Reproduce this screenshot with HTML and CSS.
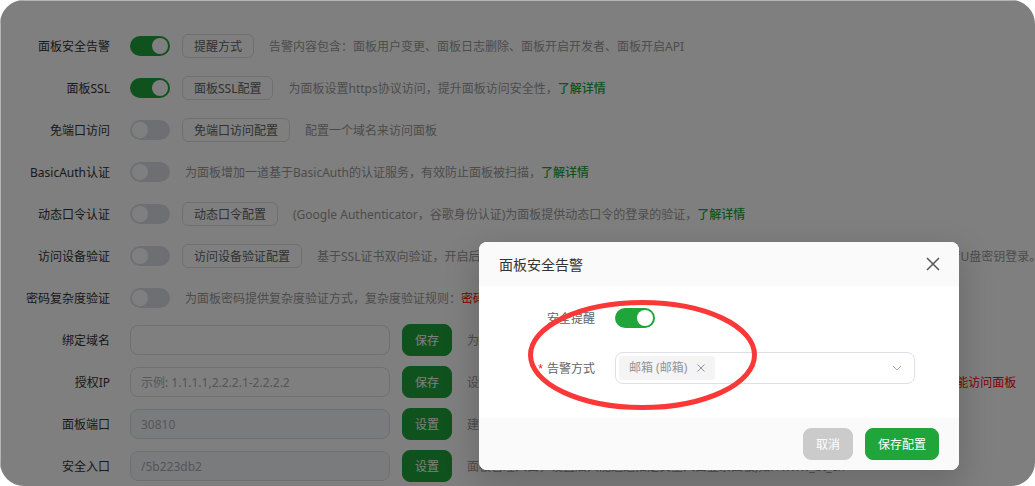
FILE: index.html
```html
<!DOCTYPE html>
<html lang="zh-CN">
<head>
  <meta charset="UTF-8">
  <meta name="viewport" content="width=device-width, initial-scale=1.0">
  <title>面板设置</title>
  <link rel="stylesheet" href="styles.css">
</head>
<body>
  <div class="panel">
    <form class="settings">
      <div class="row">
        <label class="label" for="alarm">面板安全告警</label>
        <input type="checkbox" class="switch" id="alarm" checked>
        <button type="button" class="btn">提醒方式</button>
        <p class="hint">告警内容包含：面板用户变更、面板日志删除、面板开启开发者、面板开启API</p>
      </div>
      <div class="row">
        <label class="label" for="ssl">面板SSL</label>
        <input type="checkbox" class="switch" id="ssl" checked>
        <button type="button" class="btn">面板SSL配置</button>
        <p class="hint">为面板设置https协议访问，提升面板访问安全性，<a href="#">了解详情</a></p>
      </div>
      <div class="row">
        <label class="label" for="no-port">免端口访问</label>
        <input type="checkbox" class="switch" id="no-port">
        <button type="button" class="btn">免端口访问配置</button>
        <p class="hint">配置一个域名来访问面板</p>
      </div>
      <div class="row">
        <label class="label" for="basic-auth">BasicAuth认证</label>
        <input type="checkbox" class="switch" id="basic-auth">
        <p class="hint">为面板增加一道基于BasicAuth的认证服务，有效防止面板被扫描，<a href="#">了解详情</a></p>
      </div>
      <div class="row">
        <label class="label" for="otp">动态口令认证</label>
        <input type="checkbox" class="switch" id="otp">
        <button type="button" class="btn">动态口令配置</button>
        <p class="hint">(Google Authenticator，谷歌身份认证)为面板提供动态口令的登录的验证，<a href="#">了解详情</a></p>
      </div>
      <div class="row">
        <label class="label" for="device">访问设备验证</label>
        <input type="checkbox" class="switch" id="device">
        <button type="button" class="btn">访问设备验证配置</button>
        <p class="hint">基于SSL证书双向验证，开启后，仅允许已安装授权证书的设备访问面板，未授权设备将无法打开面板登录页面，类似银行U盘密钥登录。</p>
      </div>
      <div class="row">
        <label class="label" for="complexity">密码复杂度验证</label>
        <input type="checkbox" class="switch" id="complexity">
        <p class="hint">为面板密码提供复杂度验证方式，复杂度验证规则：<span class="warn">密码长度大于8位且大写字母、小写字母、数字、特殊字符至少3项组合</span></p>
      </div>
      <div class="row">
        <label class="label" for="domain">绑定域名</label>
        <input type="text" class="text" id="domain">
        <button type="button" class="btn btn-primary">保存</button>
        <p class="hint">为面板绑定一个访问域名；<span class="warn">注意：一旦绑定域名，只能通过域名访问面板</span></p>
      </div>
      <div class="row">
        <label class="label" for="ip">授权IP</label>
        <input type="text" class="text" id="ip" placeholder="示例: 1.1.1.1,2.2.2.1-2.2.2.2">
        <button type="button" class="btn btn-primary">保存</button>
        <p class="hint">设置访问授权IP，可设置多个IP地址，逗号隔开，<span class="warn">注意：一旦设置授权IP，只有指定IP的电脑能访问面板</span></p>
      </div>
      <div class="row">
        <label class="label" for="port">面板端口</label>
        <input type="text" class="text" id="port" value="30810" disabled>
        <button type="button" class="btn btn-primary">设置</button>
        <p class="hint">建议端口范围8888 - 65535，<span class="warn">注意：请提前在安全组放行新端口</span></p>
      </div>
      <div class="row">
        <label class="label" for="entry">安全入口</label>
        <input type="text" class="text" id="entry" value="/5b223db2" disabled>
        <button type="button" class="btn btn-primary">设置</button>
        <p class="hint">面板管理入口，设置后只能通过指定安全入口登录面板,如: /www_bt_cn</p>
      </div>
    </form>

    <div class="overlay">
      <div class="dialog" role="dialog" aria-labelledby="dialog-title">
        <div class="dialog-header">
          <h2 id="dialog-title">面板安全告警</h2>
          <button type="button" class="close" aria-label="关闭">
            <svg width="14" height="14" viewBox="0 0 14 14"><path d="M1 1l12 12M13 1L1 13"/></svg>
          </button>
        </div>
        <div class="dialog-body">
          <div class="field">
            <label class="field-label" for="remind">安全提醒</label>
            <input type="checkbox" class="switch" id="remind" checked>
          </div>
          <div class="field">
            <label class="field-label required" for="way">告警方式</label>
            <div class="multi">
              <span class="tag">邮箱 (邮箱)
                <button type="button" class="tag-close" aria-label="移除">
                  <svg width="8" height="8" viewBox="0 0 8 8"><path d="M0.5 0.5l7 7M7.5 0.5l-7 7"/></svg>
                </button>
              </span>
              <select id="way"><option></option></select>
              <svg class="arrow" width="10" height="6" viewBox="0 0 10 6"><path d="M1 1l4 4 4-4"/></svg>
            </div>
          </div>
        </div>
        <div class="dialog-footer">
          <button type="button" class="btn btn-cancel">取消</button>
          <button type="button" class="btn btn-primary">保存配置</button>
        </div>
        <!-- 红圈标注 -->
        <svg class="mark" width="230" height="112" viewBox="0 0 230 112"><ellipse cx="115.5" cy="56" rx="112" ry="52.5"/></svg>
      </div>
    </div>
  </div>
</body>
</html>
```
FILE: styles.css
```css
* {
  box-sizing: border-box;
}
body {
  margin: 0;
  background-color: #fff;
}
body, button, input, select {
  font-family: "Noto Sans", "Noto Sans CJK SC", sans-serif;
  font-size: 12px;
  line-height: 18px;
}
.panel {
  position: relative;
  overflow: hidden;
  height: 100vh;
  border-radius: 24px;
}
/* 设置列表 */
.settings {
  display: flex;
  flex-direction: column;
  gap: 10px;
  padding-top: 30px;
}
.row {
  display: flex;
  align-items: center;
  gap: 12px;
  height: 32px;
  white-space: nowrap;
}
.label {
  flex: none;
  width: 110px;
  margin-right: 8px;
  padding-top: 2px;
  text-align: right;
  color: #333;
}
.hint {
  margin: 0 0 0 3px;
  padding-top: 2px;
  color: #999;
}
.hint a {
  color: #20a53a;
  font-weight: 500;
  text-decoration: none;
}
.warn {
  color: #f00;
}
/* 开关 */
.switch {
  flex: none;
  display: flex;
  align-items: center;
  appearance: none;
  width: 40px;
  height: 20px;
  margin: 0;
  padding: 0 2px;
  border-radius: 10px;
  background-color: #dcdfe6;
  cursor: pointer;
}
.switch::before {
  content: "";
  width: 16px;
  height: 16px;
  border-radius: 50%;
  background-color: #fff;
}
.switch:checked {
  justify-content: flex-end;
  background-color: #20a53a;
}
/* 按钮 */
.btn {
  flex: none;
  height: 24px;
  padding: 2px 11px 0;
  border: 1px solid #dcdfe6;
  border-radius: 6px;
  color: #606266;
  background-color: #fff;
  cursor: pointer;
}
.btn-primary, .btn-cancel {
  height: 32px;
  padding: 2px 12px 0;
  border-color: #20a53a;
  border-radius: 8px;
  color: #fff;
  background-color: #20a53a;
}
.btn-cancel {
  border-color: #cbcbcb;
  background-color: #cbcbcb;
}
/* 输入框 */
.text {
  flex: none;
  width: 260px;
  height: 30px;
  padding: 0 10px;
  border: 1px solid #dcdfe6;
  border-radius: 8px;
  color: #606266;
  background-color: #fff;
}
.text::placeholder {
  color: #a8abb2;
}
.text:disabled {
  color: #a8abb2;
  background-color: #f5f7fa;
}
/* 遮罩 */
.overlay {
  position: absolute;
  inset: 0;
  display: flex;
  justify-content: flex-end;
  align-items: flex-end;
  padding: 0 76px 16px 0;
  border: 0 solid #b4b4b4;
  border-width: 1px 0 0 1px;
  background-color: rgba(0, 0, 0, 0.5);
}
/* 弹窗 */
.dialog {
  position: relative;
  width: 480px;
  border-radius: 8px;
  background-color: #fff;
  box-shadow: 0 12px 32px 4px rgba(0, 0, 0, 0.16);
}
.dialog-header {
  display: flex;
  align-items: center;
  justify-content: space-between;
  height: 44px;
  padding: 0 19px 0 20px;
  border-radius: 8px 8px 0 0;
  background-color: #fafafa;
}
.dialog-header h2 {
  margin: 0;
  padding-top: 2px;
  font-size: 14px;
  font-weight: 400;
  line-height: 20px;
  color: #333;
}
.close, .tag-close {
  display: flex;
  padding: 0;
  border: none;
  background: none;
  cursor: pointer;
}
.close path {
  stroke: #555;
  stroke-width: 1.5;
}
.dialog-body {
  display: flex;
  flex-direction: column;
  gap: 18px;
  padding: 16px 44px 34px 0;
}
.field {
  display: flex;
  align-items: center;
  gap: 20px;
  height: 32px;
}
.field-label {
  flex: none;
  width: 116px;
  padding-top: 2px;
  text-align: right;
  color: #606266;
}
.required::before {
  content: "*";
  margin-right: 4px;
  font-family: "Liberation Sans", sans-serif;
  color: #e02020;
}
/* 多选下拉 */
.multi {
  flex: 1;
  display: flex;
  align-items: center;
  height: 32px;
  padding: 0 12px 0 3px;
  border: 1px solid #dcdfe6;
  border-radius: 8px;
}
.multi select {
  flex: 1;
  appearance: none;
  height: 24px;
  border: none;
  background: none;
}
.tag {
  display: flex;
  align-items: center;
  gap: 10px;
  height: 24px;
  padding: 0 10px;
  border-radius: 4px;
  color: #909399;
  background-color: #f4f4f5;
}
.tag-close path {
  stroke: #909399;
}
.arrow path {
  fill: none;
  stroke: #a8abb2;
}
.dialog-footer {
  display: flex;
  justify-content: flex-end;
  gap: 12px;
  padding: 10px 20px;
  border-radius: 0 0 8px 8px;
  background-color: #fafafa;
}
.mark {
  position: absolute;
  top: 57px;
  left: 48px;
  pointer-events: none;
}
.mark ellipse {
  fill: none;
  stroke: #fa3838;
  stroke-width: 5;
}
```
